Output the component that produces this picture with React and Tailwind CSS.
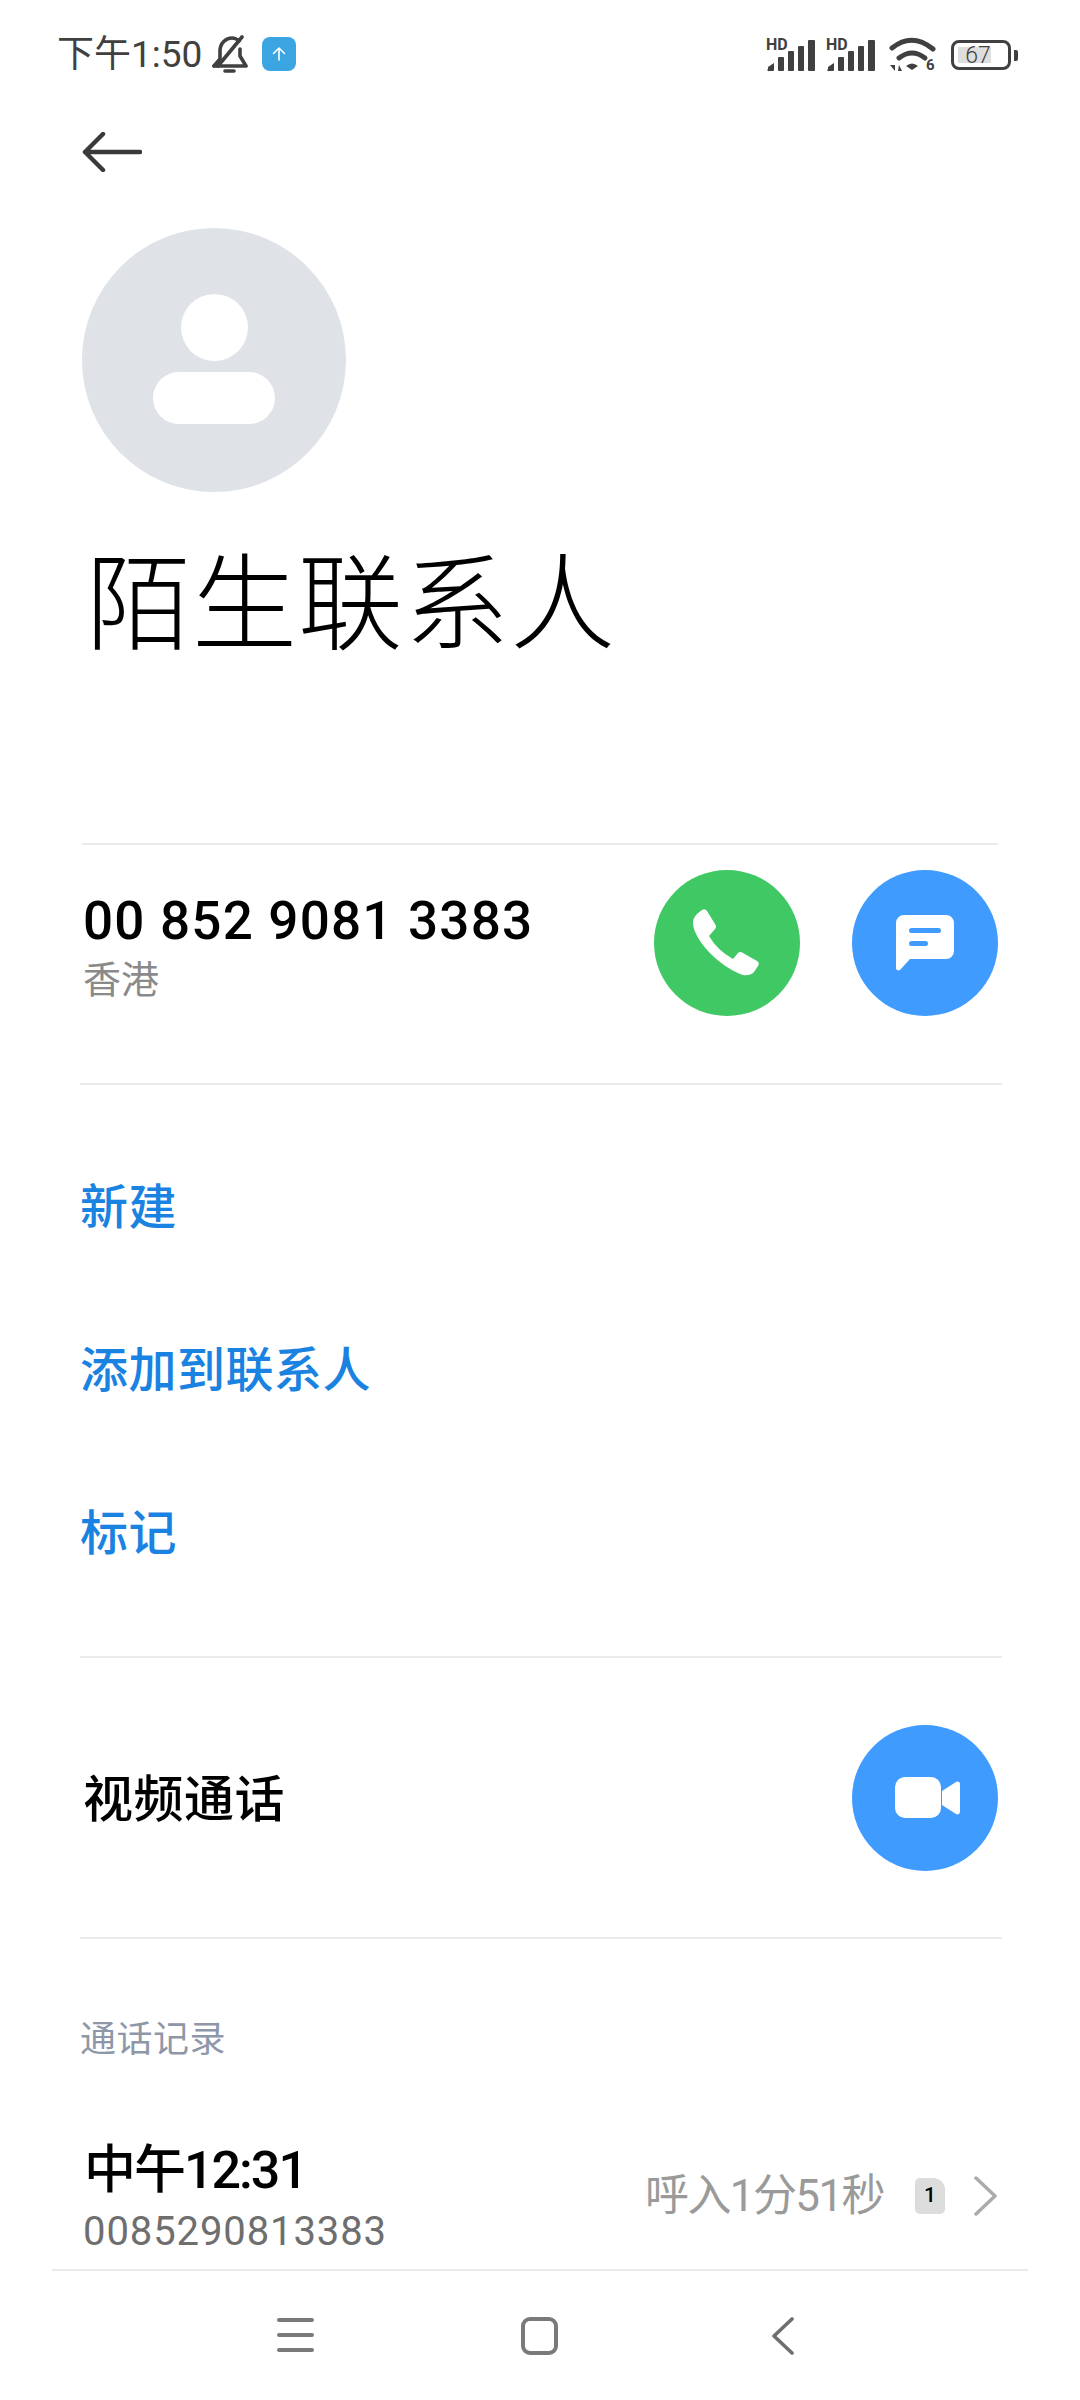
import React from "react";

const FONT = "font-['Roboto','Noto_Sans_CJK_SC',sans-serif]";

const SignalIcon = () => (
  <svg width="50" height="42" viewBox="0 -8 50 42" className="-mt-[8px]" fill="#404040">
    <text x="0" y="12" fontSize="16" fontWeight="700" fontFamily="Roboto, sans-serif">HD</text>
    <path d="M2 31v-2l6-4v7a1 1 0 0 1-1 1H3a1 1 0 0 1-1-2z" />
    <rect x="12" y="19" width="6" height="14" rx="1" />
    <rect x="22" y="13" width="6" height="20" rx="1" />
    <rect x="32" y="8" width="6" height="25" rx="1" />
    <rect x="42" y="2" width="7" height="31" rx="1" />
  </svg>
);

const WifiIcon = () => (
  <svg width="48" height="38" viewBox="0 0 48 38" fill="none">
    <path d="M3 12Q23 -4 44 13" stroke="#404040" strokeWidth="5" strokeLinecap="round" />
    <path d="M10 22Q23 12 36 22" stroke="#404040" strokeWidth="5" strokeLinecap="round" />
    <path d="M17 30Q23 25 29 30L23 34z" fill="#404040" />
    <path d="M1 29h5v6zM8 35v-6M9 35h4l-3-6z" fill="#404040" />
    <text x="37" y="34" fontSize="15" fontWeight="700" fill="#404040" fontFamily="Roboto, sans-serif">6</text>
  </svg>
);

const Battery = () => (
  <div className="flex items-center gap-[3px]">
    <div className="relative w-[60px] h-[30px] rounded-[8px] border-[3px] border-[#404040] p-[4px]">
      <div className="h-full w-[33px] bg-[#dedede]" />
      <span className={`absolute inset-0 flex items-center justify-center pr-[6px] text-[23px] leading-none font-light text-[#404040] ${FONT}`}>
        67
      </span>
    </div>
    <div className="w-[4px] h-[11px] rounded-r-[2px] bg-[#404040]" />
  </div>
);

const StatusBar = () => (
  <div className="h-[108px] pl-[57px] pr-[62px] flex items-center justify-between">
    <div className="flex items-center">
      <span className={`text-[37px] leading-none text-[#404040] ${FONT}`}>下午1:50</span>
      <svg className="ml-[10px]" width="36" height="38" viewBox="0 0 36 38" fill="none" stroke="#404040" strokeWidth="3.6" strokeLinecap="round" strokeLinejoin="round">
        <path d="M2 31L8 24V16C8 8 14 3 20 3C23 3 25 4 27 6" />
        <path d="M28 14V21L34 31H2" />
        <path d="M6 31L30 2" />
        <path d="M13 36H22" />
      </svg>
      <div className="ml-[14px] w-[34px] h-[34px] rounded-[8px] bg-[#3ba5e2] flex items-center justify-center">
        <svg width="16" height="16" viewBox="0 0 16 16" fill="none" stroke="white" strokeWidth="1.6" strokeLinecap="round" strokeLinejoin="round">
          <path d="M8 14V2M2.5 7.5L8 2l5.5 5.5" />
        </svg>
      </div>
    </div>
    <div className="flex items-center mt-[2px]">
      <SignalIcon />
      <div className="ml-[10px]"><SignalIcon /></div>
      <div className="ml-[13px]"><WifiIcon /></div>
      <div className="ml-[14px]"><Battery /></div>
    </div>
  </div>
);

const Divider = ({ className = "ml-[80px] mr-[78px]" }) => <div className={`h-[2px] bg-[#ebebeb] ${className}`} />;

const RoundButton = ({ color, children }) => (
  <button className={`w-[146px] h-[146px] rounded-full flex items-center justify-center ${color}`}>
    {children}
  </button>
);

const ActionLink = ({ label }) => (
  <div className={`h-[163px] flex items-center text-[48px] leading-none font-medium tracking-[0.5px] text-[#1a82e0] ${FONT}`}>
    {label}
  </div>
);

export default function App() {
  return (
    <div className={`w-[1080px] h-[2400px] bg-white overflow-hidden flex flex-col ${FONT}`}>
      <StatusBar />

      {/* back arrow */}
      <div className="pl-[82px] h-[88px] flex items-center">
        <svg width="60" height="40" viewBox="0 0 60 40" fill="none" stroke="#3a3a3a" strokeWidth="4.5" strokeLinecap="round" strokeLinejoin="round">
          <path d="M58 20H3M21 2L3 20l18 18" />
        </svg>
      </div>

      {/* avatar */}
      <div className="mt-[32px] ml-[82px] w-[264px] h-[264px] rounded-full bg-[#dfe2e6] flex flex-col items-center pt-[66px]">
        <div className="w-[67px] h-[67px] rounded-full bg-white" />
        <div className="mt-[11px] w-[122px] h-[52px] rounded-full bg-white" />
      </div>

      <div className="mt-[51px] ml-[86px] text-[105px] leading-[126px] font-light text-black tracking-[1px]">
        陌生联系人
      </div>

      <div className="mt-[174px]"><Divider className="ml-[82px] mr-[82px]" /></div>

      {/* phone number */}
      <div className="h-[238px] pl-[83px] pr-[82px] flex items-center justify-between pb-[43px]">
        <div className="flex flex-col pt-[6px]">
          <span className="text-[53px] leading-[62px] font-medium text-black tracking-[1.2px]">00 852 9081 3383</span>
          <span className="mt-[6px] text-[38px] leading-[44px] text-[#8a8a8a]">香港</span>
        </div>
        <div className="flex gap-[52px]">
          <RoundButton color="bg-[#3fc864]">
            <svg width="68" height="68" viewBox="0 0 68 68" fill="white">
              <path d="M9 1Q12 -1 14 2L22 15Q24 18 22 20L16 27Q24 41 40 50L45 44Q47 42 50 44L64 52Q67 54 65 57L61 63Q57 67 50 66C32 60 8 40 1 20Q-1 13 1 9Q4 4 9 1z" />
            </svg>
          </RoundButton>
          <RoundButton color="bg-[#409bff]">
            <svg width="58" height="56" viewBox="0 0 58 56" fill="white">
              <path d="M8 0h42a8 8 0 0 1 8 8v28a8 8 0 0 1-8 8H14L4 55c-2 1-4 0-4-2V8a8 8 0 0 1 8-8z" />
              <rect x="13" y="13" width="32" height="5" rx="2.5" fill="#409bff" />
              <rect x="13" y="26" width="19" height="5" rx="2.5" fill="#409bff" />
            </svg>
          </RoundButton>
        </div>
      </div>

      <Divider />

      <div className="pt-[41px] pb-[41px] pl-[80px]">
        <ActionLink label="新建" />
        <ActionLink label="添加到联系人" />
        <ActionLink label="标记" />
      </div>

      <Divider />

      {/* video call */}
      <div className="h-[279px] pl-[83px] pr-[82px] flex items-center justify-between">
        <span className="mt-[5px] text-[50px] leading-none font-medium text-black tracking-[0.5px]">视频通话</span>
        <RoundButton color="bg-[#409bff]">
          <svg className="ml-[5px]" width="66" height="42" viewBox="0 0 66 42" fill="white">
            <rect x="0" y="0" width="46" height="41" rx="10" />
            <path d="M47 14l14-9c2-1 4 0 4 2v27c0 3-2 4-4 3L47 28z" />
          </svg>
        </RoundButton>
      </div>

      <Divider />

      {/* call history */}
      <div className="h-[132px] pl-[80px] pt-[83px] text-[36px] leading-none tracking-[0.5px] text-[#8e97a8]">通话记录</div>

      <div className="h-[198px] pl-[84px] pr-[83px] flex items-start justify-between pt-[69px]">
        <div className="flex flex-col">
          <span className="text-[52px] leading-[62px] font-medium tracking-[-2px] text-black">中午12:31</span>
          <span className="mt-[6px] -ml-[1px] text-[40px] leading-[48px] text-[#6e6e6e] tracking-[0.9px]">0085290813383</span>
        </div>
        <div className="flex items-center mt-[34px]">
          <span className="text-[44px] leading-none tracking-[-1.6px] text-[#9a9a9a]">呼入1分51秒</span>
          <div className="ml-[31px] w-[30px] h-[36px] rounded-[5px] rounded-tr-[12px] bg-[#dcdcdc] flex items-center justify-center text-[21px] font-medium text-black">
            1
          </div>
          <svg className="ml-[28px]" width="24" height="40" viewBox="0 0 24 40" fill="none" stroke="#ababab" strokeWidth="3.5" strokeLinecap="round" strokeLinejoin="round">
            <path d="M3 2l19 18L3 38" />
          </svg>
        </div>
      </div>

      <Divider className="ml-[52px] mr-[52px]" />

      {/* navigation bar */}
      <div className="flex-1 relative">
        <div className="absolute left-[277px] top-[47px] flex flex-col gap-[11px]">
          <div className="w-[37px] h-[4px] rounded bg-[#7a7a7a]" />
          <div className="w-[37px] h-[4px] rounded bg-[#7a7a7a]" />
          <div className="w-[37px] h-[4px] rounded bg-[#7a7a7a]" />
        </div>
        <div className="absolute left-[521px] top-[46px] w-[37px] h-[38px] rounded-[9px] border-[4px] border-[#7a7a7a]" />
        <svg className="absolute left-[771px] top-[46px]" width="24" height="38" viewBox="0 0 24 38" fill="none" stroke="#6e6e6e" strokeWidth="3.6" strokeLinecap="round" strokeLinejoin="round">
          <path d="M21 2L3 19l18 17" />
        </svg>
      </div>
    </div>
  );
}
